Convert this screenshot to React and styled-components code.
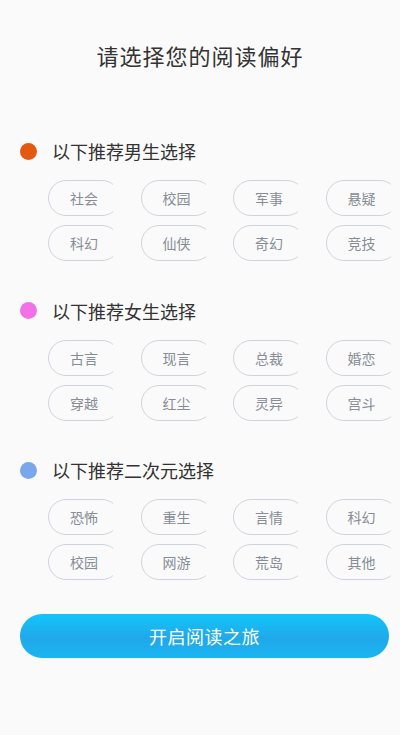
import { styled, createGlobalStyle } from "styled-components";

const GlobalStyle = createGlobalStyle`
  html, body {
    margin: 0;
    padding: 0;
    background: #fafafa;
  }
  body {
    font-family: "Noto Sans CJK SC", "Noto Sans", sans-serif;
  }
`;

const Page = styled.div`
  width: 400px;
  height: 735px;
  box-sizing: border-box;
  padding-top: 40px;
  background: #fafafa;
  display: flex;
  flex-direction: column;
`;

const Title = styled.h1`
  margin: 0 0 69px;
  height: 30px;
  line-height: 30px;
  text-align: center;
  font-size: 22px;
  font-weight: 400;
  color: #333;
  letter-spacing: 1px;
`;

const Section = styled.section`
  display: flex;
  flex-direction: column;
  gap: 17px;
  margin-bottom: ${(p) => (p.$last ? "34px" : "37.5px")};
`;

const Header = styled.div`
  display: flex;
  align-items: center;
  height: 24px;
  padding-left: 20px;
  gap: 15px;
  font-size: 18px;
  color: #333;
`;

const Dot = styled.span`
  width: 17px;
  height: 17px;
  border-radius: 50%;
  background: ${(p) => p.$color};
`;

const Grid = styled.div`
  display: grid;
  grid-template-columns: repeat(4, 65px);
  column-gap: 27.5px;
  row-gap: 9px;
  padding-left: 48px;
`;

const ChipClip = styled.div`
  width: 65px;
  height: 36px;
  overflow: hidden;
`;

const Chip = styled.div`
  width: 72px;
  height: 36px;
  box-sizing: border-box;
  border: 1px solid #cfd3dc;
  border-radius: 18px;
  display: flex;
  align-items: center;
  justify-content: center;
  font-size: 14px;
  color: #878c97;
`;

const StartButton = styled.button`
  margin: 0 11px 0 20px;
  height: 44px;
  border: none;
  border-radius: 22px;
  background: linear-gradient(180deg, #12c6fa 0%, #20a8ea 55%, #1ab5f1 100%);
  color: #fff;
  font-family: inherit;
  font-size: 18px;
  letter-spacing: 0.5px;
  padding: 0;
`;

const sections = [
  {
    title: "以下推荐男生选择",
    color: "#e3590f",
    tags: ["社会", "校园", "军事", "悬疑", "科幻", "仙侠", "奇幻", "竞技"],
  },
  {
    title: "以下推荐女生选择",
    color: "#f072e6",
    tags: ["古言", "现言", "总裁", "婚恋", "穿越", "红尘", "灵异", "宫斗"],
  },
  {
    title: "以下推荐二次元选择",
    color: "#7aa6ec",
    tags: ["恐怖", "重生", "言情", "科幻", "校园", "网游", "荒岛", "其他"],
  },
];

function App() {
  return (
    <Page>
      <GlobalStyle />
      <Title>请选择您的阅读偏好</Title>
      {sections.map((s, i) => (
        <Section key={s.title} $last={i === sections.length - 1}>
          <Header>
            <Dot $color={s.color} />
            {s.title}
          </Header>
          <Grid>
            {s.tags.map((t) => (
              <ChipClip key={t}>
                <Chip>{t}</Chip>
              </ChipClip>
            ))}
          </Grid>
        </Section>
      ))}
      <StartButton>开启阅读之旅</StartButton>
    </Page>
  );
}

export default App;
